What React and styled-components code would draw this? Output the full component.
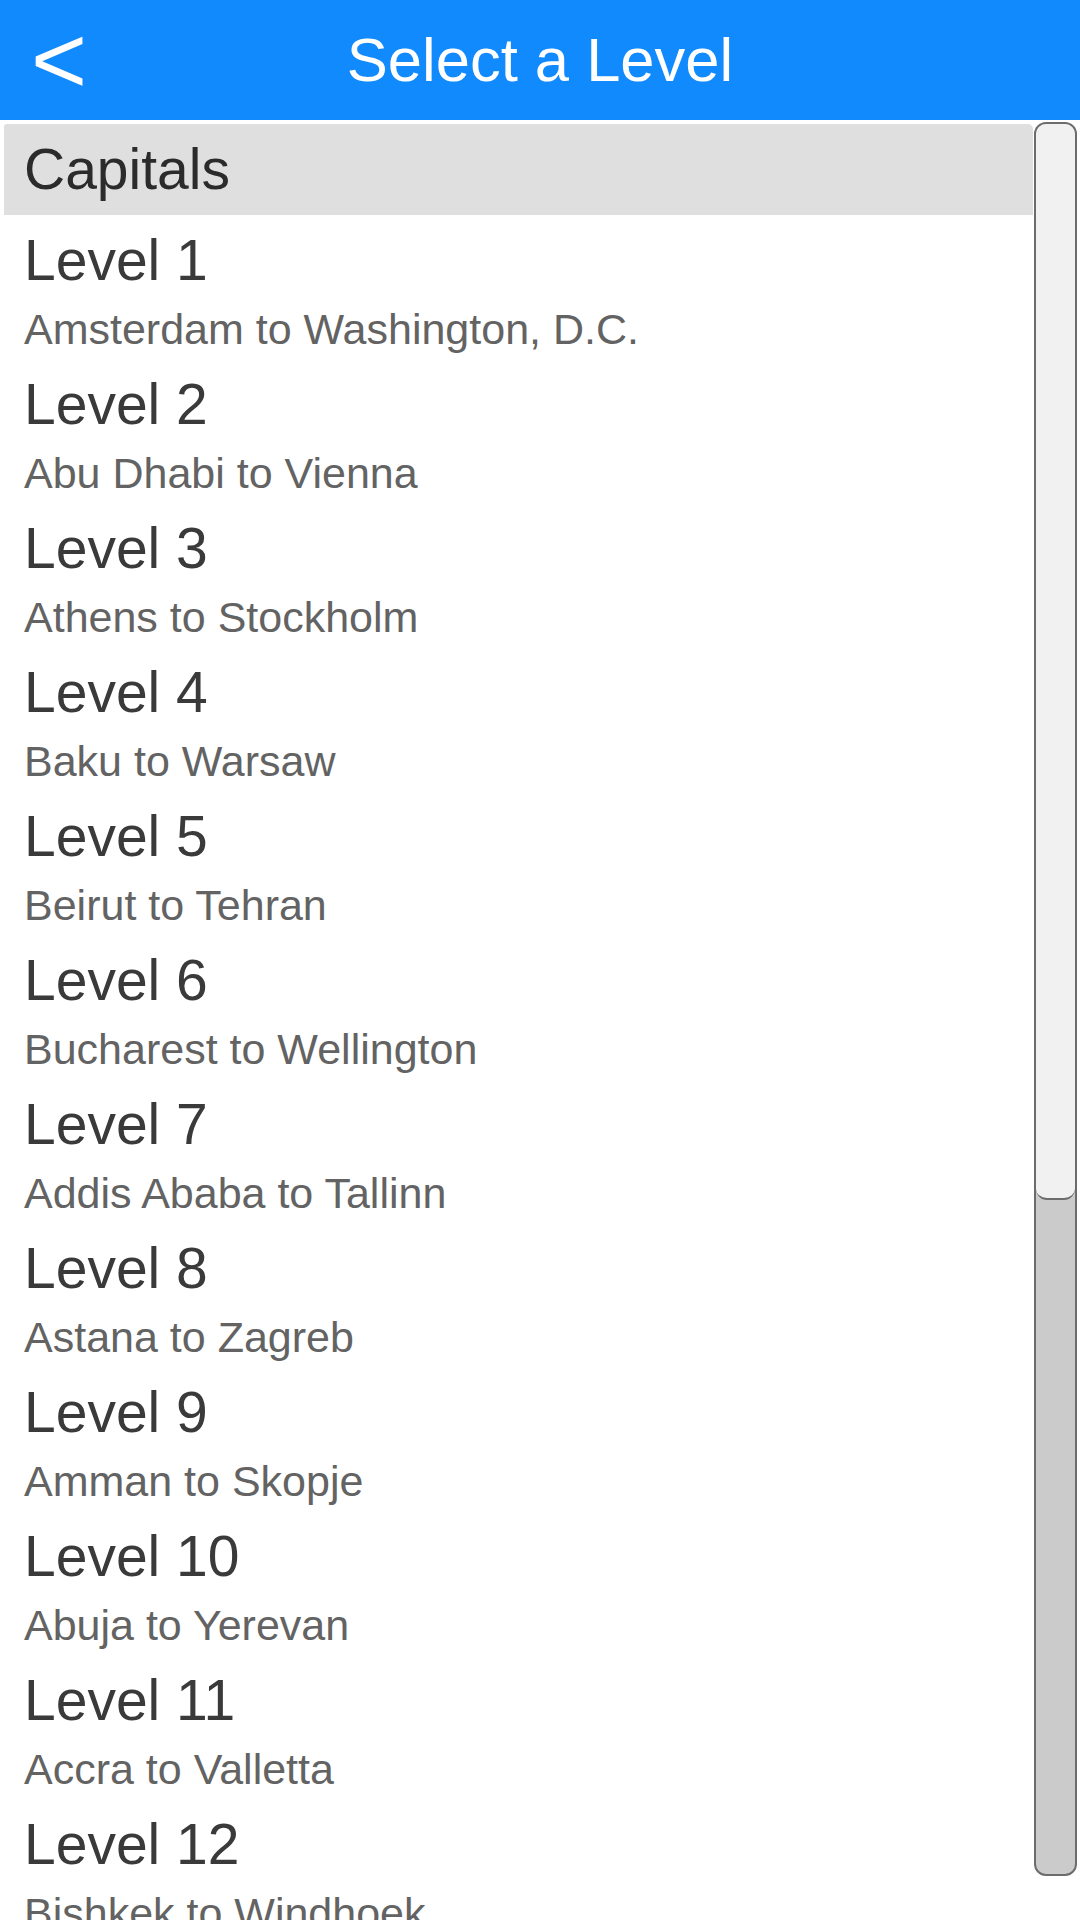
import React from 'react';
import styled, { createGlobalStyle } from 'styled-components';

const GlobalStyle = createGlobalStyle`
  html, body {
    margin: 0;
    padding: 0;
    background: #ffffff;
  }
  body {
    font-family: "Liberation Sans", Arial, sans-serif;
    overflow: hidden;
  }
`

const Screen = styled.div`
  width: 1080px;
  height: 1920px;
  display: flex;
  flex-direction: column;
  overflow: hidden;
  background: #ffffff;
`

const TopBar = styled.header`
  height: 120px;
  flex-shrink: 0;
  background: #118afe;
  color: #ffffff;
  display: grid;
  grid-template-columns: 1fr auto 1fr;
  align-items: center;
`

const BackButton = styled.button`
  justify-self: start;
  background: none;
  border: none;
  padding: 0 0 0 31px;
  margin: 0;
  color: #ffffff;
  font-family: "Liberation Sans", Arial, sans-serif;
  font-size: 96px;
  line-height: 120px;
  height: 120px;
  cursor: pointer;
`

const Title = styled.h1`
  margin: 0;
  font-size: 61.5px;
  font-weight: normal;
  line-height: 120px;
  white-space: nowrap;
`

const Body = styled.div`
  flex: 1;
  display: flex;
  min-height: 0;
`

const ListArea = styled.div`
  flex: 1;
  padding: 4px 1px 0 4px;
  overflow: hidden;
`

const SectionHeader = styled.div`
  height: 91px;
  background: #dfdfdf;
  border-radius: 3px 5px 0 0;
  padding-left: 20px;
  font-size: 57px;
  line-height: 91px;
  color: #2b2b2b;
`

const LevelRow = styled.div`
  height: 144px;
  padding: 12px 0 0 20px;
  box-sizing: border-box;
  cursor: pointer;
`

const LevelName = styled.div`
  font-size: 57px;
  line-height: 66px;
  color: #3a3a3a;
  white-space: nowrap;
`

const LevelRange = styled.div`
  margin-top: 6px;
  font-size: 43px;
  line-height: 60px;
  color: #636363;
  white-space: nowrap;
`

const ScrollTrack = styled.div`
  width: 39px;
  height: 1750px;
  margin: 2px 3px 0 0;
  border: 2px solid #6c6c6c;
  border-radius: 12px;
  background: #cbcbcb;
  overflow: hidden;
  display: flex;
  flex-direction: column;
`

const ScrollThumb = styled.div`
  flex-shrink: 0;
  background: #f1f1f1;
  border-bottom: 2px solid #6c6c6c;
  border-radius: 0 0 11px 11px;
`

const levels = [
  'Amsterdam to Washington, D.C.',
  'Abu Dhabi to Vienna',
  'Athens to Stockholm',
  'Baku to Warsaw',
  'Beirut to Tehran',
  'Bucharest to Wellington',
  'Addis Ababa to Tallinn',
  'Astana to Zagreb',
  'Amman to Skopje',
  'Abuja to Yerevan',
  'Accra to Valletta',
  'Bishkek to Windhoek',
];

export default function App() {
  const thumbHeight = 1074;

  return (
    <>
      <GlobalStyle />
      <Screen>
        <TopBar>
          <BackButton>&lt;</BackButton>
          <Title>Select a Level</Title>
          <span />
        </TopBar>
        <Body>
          <ListArea>
            <SectionHeader>Capitals</SectionHeader>
            {levels.map((range, i) => (
              <LevelRow key={range}>
                <LevelName>Level {i + 1}</LevelName>
                <LevelRange>{range}</LevelRange>
              </LevelRow>
            ))}
          </ListArea>
          <ScrollTrack>
            <ScrollThumb style={{ height: thumbHeight }} />
          </ScrollTrack>
        </Body>
      </Screen>
    </>
  )
}
